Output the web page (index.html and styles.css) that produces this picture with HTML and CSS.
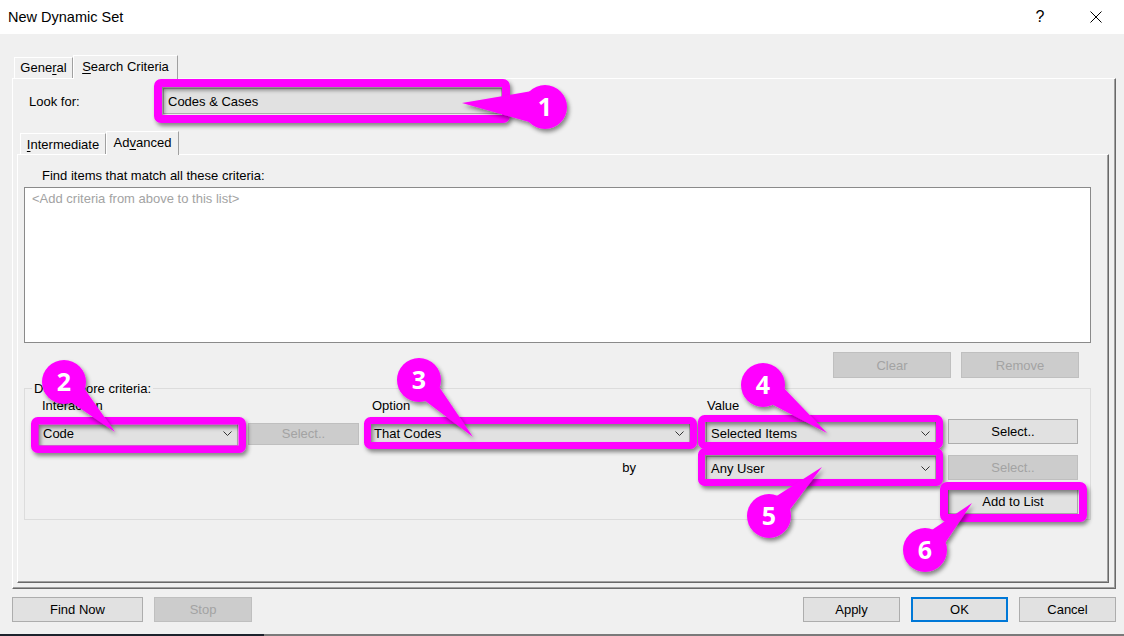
FILE: index.html
```html
<!DOCTYPE html>
<html lang="en">
<head>
<meta charset="utf-8">
<title>New Dynamic Set</title>
<link rel="stylesheet" href="styles.css">
</head>
<body>
<div class="titlebar">
  <div class="title">New Dynamic Set</div>
  <div class="cap-btn help">?</div>
  <div class="cap-btn close">
    <svg width="12" height="12" viewBox="0 0 12 12"><path d="M0.5 0.5 L11.5 11.5 M11.5 0.5 L0.5 11.5" stroke="#000" stroke-width="1" fill="none"/></svg>
  </div>
</div>

<div class="client">
  <div class="tabs outer-tabs">
    <div class="tab tab-general">Gene<u>r</u>al</div>
    <div class="tab tab-search active"><u>S</u>earch Criteria</div>
  </div>
  <div class="panel outer-panel">
    <div class="lookfor">
      <div class="lookfor-label">Look for:</div>
      <div class="combo combo-lookfor"><span>Codes &amp; Cases</span>
        <svg class="chev" width="9" height="5" viewBox="0 0 9 5"><path d="M0.5 0.5 L4.5 4.5 L8.5 0.5" stroke="#333" fill="none"/></svg>
      </div>
    </div>
    <div class="tabs inner-tabs">
      <div class="tab tab-inter"><u>I</u>ntermediate</div>
      <div class="tab tab-adv active">Ad<u>v</u>anced</div>
    </div>
    <div class="panel inner-panel">
      <div class="find-label">Find items that match all these criteria:</div>
      <div class="listbox"><span class="placeholder">&lt;Add criteria from above to this list&gt;</span></div>
      <div class="list-actions">
        <div class="btn disabled w118">Clear</div>
        <div class="btn disabled w118">Remove</div>
      </div>
      <div class="groupbox">
        <div class="gb-title">Define more criteria:</div>
        <div class="criteria-grid">
          <div class="lbl c1">Interaction</div>
          <div class="lbl c3">Option</div>
          <div class="lbl c4">Value</div>

          <div class="combo c1 r2 w200"><span>Code</span>
            <svg class="chev" width="9" height="5" viewBox="0 0 9 5"><path d="M0.5 0.5 L4.5 4.5 L8.5 0.5" stroke="#333" fill="none"/></svg>
          </div>
          <div class="btn disabled c2 r2 small">Select..</div>
          <div class="combo c3 r2 w321"><span>That Codes</span>
            <svg class="chev" width="9" height="5" viewBox="0 0 9 5"><path d="M0.5 0.5 L4.5 4.5 L8.5 0.5" stroke="#333" fill="none"/></svg>
          </div>
          <div class="combo c4 r2 w230"><span>Selected Items</span>
            <svg class="chev" width="9" height="5" viewBox="0 0 9 5"><path d="M0.5 0.5 L4.5 4.5 L8.5 0.5" stroke="#333" fill="none"/></svg>
          </div>
          <div class="btn c5 r2 raised">Select..</div>

          <div class="by c3 r3">by</div>
          <div class="combo c4 r3 w230 low"><span>Any User</span>
            <svg class="chev" width="9" height="5" viewBox="0 0 9 5"><path d="M0.5 0.5 L4.5 4.5 L8.5 0.5" stroke="#333" fill="none"/></svg>
          </div>
          <div class="btn disabled c5 r3 low">Select..</div>

          <div class="btn c5 r4">Add to List</div>
        </div>
      </div>
    </div>
  </div>
  <div class="footer">
    <div class="btn find">Find Now</div>
    <div class="btn disabled stop">Stop</div>
    <div class="spacer"></div>
    <div class="btn fbtn">Apply</div>
    <div class="btn fbtn default">OK</div>
    <div class="btn fbtn">Cancel</div>
  </div>
</div>
<div class="taskbar-edge"></div>

<svg class="annotations" width="1124" height="636" viewBox="0 0 1124 636">
  <defs>
    <filter id="sh" filterUnits="userSpaceOnUse" x="0" y="0" width="1124" height="636">
      <feDropShadow dx="2" dy="3" stdDeviation="2" flood-color="#000" flood-opacity="0.45"/>
    </filter>
  </defs>
  <g filter="url(#sh)" fill="none" stroke="#ff00ff" stroke-linejoin="round">
    <rect x="158" y="83" width="348" height="36" rx="3" stroke-width="8"/>
    <rect x="34.75" y="420.75" width="207.5" height="28.5" rx="3" stroke-width="7.5"/>
    <rect x="367.5" y="420.5" width="326" height="25" rx="3" stroke-width="7"/>
    <rect x="701.5" y="418.5" width="238" height="27" rx="3" stroke-width="7"/>
    <rect x="701.5" y="451.5" width="238" height="31" rx="3" stroke-width="7"/>
    <rect x="944" y="486" width="139" height="32" rx="3" stroke-width="8"/>
  </g>
  <g filter="url(#sh)" fill="#ff00ff">
    <polygon points="462,103 532,91 540,125"/>
    <circle cx="545" cy="107" r="22"/>
    <polygon points="115,432 54.9,391.3 73.1,372.7"/>
    <circle cx="64" cy="382" r="22"/>
    <polygon points="473,437 409.6,388.9 428.4,371.1"/>
    <circle cx="419" cy="380" r="22"/>
    <polygon points="827,433 755.2,395.4 770.8,374.6"/>
    <circle cx="763" cy="385" r="22"/>
    <polygon points="822,467 777.8,525.6 760.2,506.4"/>
    <circle cx="769" cy="516" r="22"/>
    <polygon points="972,503 934.2,559.2 915.8,540.8"/>
    <circle cx="925" cy="550" r="22"/>
  </g>
  <g class="nums" fill="#fff" text-anchor="middle">
    <text x="545" y="116">1</text>
    <text x="64" y="391">2</text>
    <text x="419" y="389">3</text>
    <text x="763" y="394">4</text>
    <text x="769" y="525">5</text>
    <text x="925" y="559">6</text>
  </g>
</svg>
</body>
</html>
```

FILE: styles.css
```css
* { box-sizing: border-box; }
html, body { margin: 0; padding: 0; }
body {
  width: 1124px;
  height: 636px;
  overflow: hidden;
  position: relative;
  background: #f0f0f0;
  font-family: "Liberation Sans", Arial, sans-serif;
  font-size: 13px;
  color: #000;
}
u { text-decoration: underline; text-underline-offset: 2px; }

/* title bar */
.titlebar {
  height: 34px;
  background: #fff;
  display: flex;
  align-items: center;
  padding: 0 5px 0 8px;
}
.title { flex: 1; font-size: 14.5px; }
.cap-btn {
  width: 46px;
  height: 34px;
  display: flex;
  align-items: center;
  justify-content: center;
}
.help { font-size: 16px; margin-right: 10px; }

/* client area */
.client { padding: 21px 8px 0 12px; }

.tabs {
  display: flex;
  align-items: flex-end;
  height: 23px;
  position: relative;
  z-index: 1;
}
.outer-tabs { padding-left: 2px; }
.inner-tabs { padding-left: 3px; margin-top: 17px; }
.tab {
  height: 21px;
  line-height: 20px;
  text-align: center;
  background: #f0f0f0;
  border-top: 1px solid #fff;
  border-left: 1px solid #fff;
  border-right: 1px solid #a0a0a0;
}
.tab.active {
  height: 24px;
  line-height: 22px;
  margin-bottom: -1px;
}
.tab-general { width: 59px; }
.tab-search { width: 105px; }
.tab-inter { width: 86px; line-height: 22px; }
.tab-adv { width: 73px; }

.panel {
  background: #f0f0f0;
  border-top: 1px solid #fff;
  border-left: 1px solid #fff;
  border-right: 1px solid #696969;
  border-bottom: 1px solid #696969;
  box-shadow: inset -1px -1px 0 #a0a0a0;
}
.outer-panel {
  height: 511px;
  padding: 9px 6px 5px 4px;
  display: flex;
  flex-direction: column;
}

.lookfor {
  display: flex;
  align-items: center;
  height: 26px;
  padding-left: 12px;
}
.lookfor-label { width: 134px; }

.combo {
  display: flex;
  align-items: center;
  justify-content: space-between;
  height: 25px;
  background: #e1e1e1;
  border: 1px solid #adadad;
  padding: 0 5px 0 4px;
  white-space: nowrap;
}
.combo-lookfor { width: 339px; height: 26px; }
.chev { flex: none; }

.inner-panel {
  flex: 1;
  padding: 13px 17px 0 6px;
  display: flex;
  flex-direction: column;
}
.find-label { line-height: 15px; padding-left: 18px; }
.listbox {
  margin-top: 4px;
  height: 156px;
  background: #fff;
  border: 1px solid #8a8a8a;
  padding: 3px 7px;
  line-height: 15px;
}
.placeholder { color: #a3a3a3; }

.list-actions {
  margin-top: 9px;
  display: flex;
  justify-content: flex-end;
  gap: 10px;
  padding-right: 12px;
}

.btn {
  height: 26px;
  display: flex;
  align-items: center;
  justify-content: center;
  background: #e1e1e1;
  border: 1px solid #adadad;
  white-space: nowrap;
}
.btn.disabled {
  background: #cccccc;
  border-color: #bfbfbf;
  color: #a3a3a3;
}
.w118 { width: 118px; }

/* group box */
.groupbox {
  margin-top: 10px;
  height: 132px;
  border: 1px solid #dcdcdc;
  padding: 0 12px 0 13px;
  display: flex;
  flex-direction: column;
  align-items: flex-start;
}
.gb-title {
  margin: -8px 0 0 -6px;
  padding: 0 2px;
  line-height: 15px;
  background: #f0f0f0;
}
.criteria-grid {
  align-self: stretch;
  margin-top: 2px;
  display: grid;
  grid-template-columns: 200px 111px 327px 232px 130px;
  grid-template-rows: 15px 25px 26px 26px;
  column-gap: 10px;
  row-gap: 8px;
}
.lbl { grid-row: 1; line-height: 15px; }
.lbl.c1 { padding-left: 4px; }
.lbl.c3 { padding-left: 3px; }
.lbl.c4 { padding-left: 1px; }
.c1 { grid-column: 1; }
.c2 { grid-column: 2; }
.c3 { grid-column: 3; }
.c4 { grid-column: 4; }
.c5 { grid-column: 5; }
.r2 { grid-row: 2; }
.r3 { grid-row: 3; }
.r4 { grid-row: 4; }
.w200 { width: 200px; }
.w321 { width: 321px; }
.w230 { width: 230px; }
.small { height: 22px; align-self: center; }
.raised { height: 25px; align-self: start; margin-top: -2px; }
.low { align-self: end; }
.combo.low { height: 24px; }
.btn.low { height: 25px; }
.by { justify-self: end; align-self: center; margin-right: 60px; }

/* footer */
.footer {
  display: flex;
  margin-top: 8px;
  height: 25px;
}
.footer .btn { height: 25px; }
.find { width: 131px; }
.stop { width: 98px; margin-left: 11px; }
.spacer { flex: 1; }
.fbtn { width: 97px; margin-left: 11px; }
.fbtn.default { border: 2px solid #0078d7; }

.taskbar-edge {
  margin-top: 12px;
  height: 2px;
  background: linear-gradient(to right, #1c222c 0, #1c222c 264px, #7a7a7a 264px, #7a7a7a 100%);
}

/* annotation layer drawn on top of the dialog */
.annotations {
  position: absolute;
  left: 0;
  top: 0;
  pointer-events: none;
}
.nums text {
  font-family: "Open Sans", "Noto Sans", sans-serif;
  font-weight: 700;
  font-size: 25px;
}
```
